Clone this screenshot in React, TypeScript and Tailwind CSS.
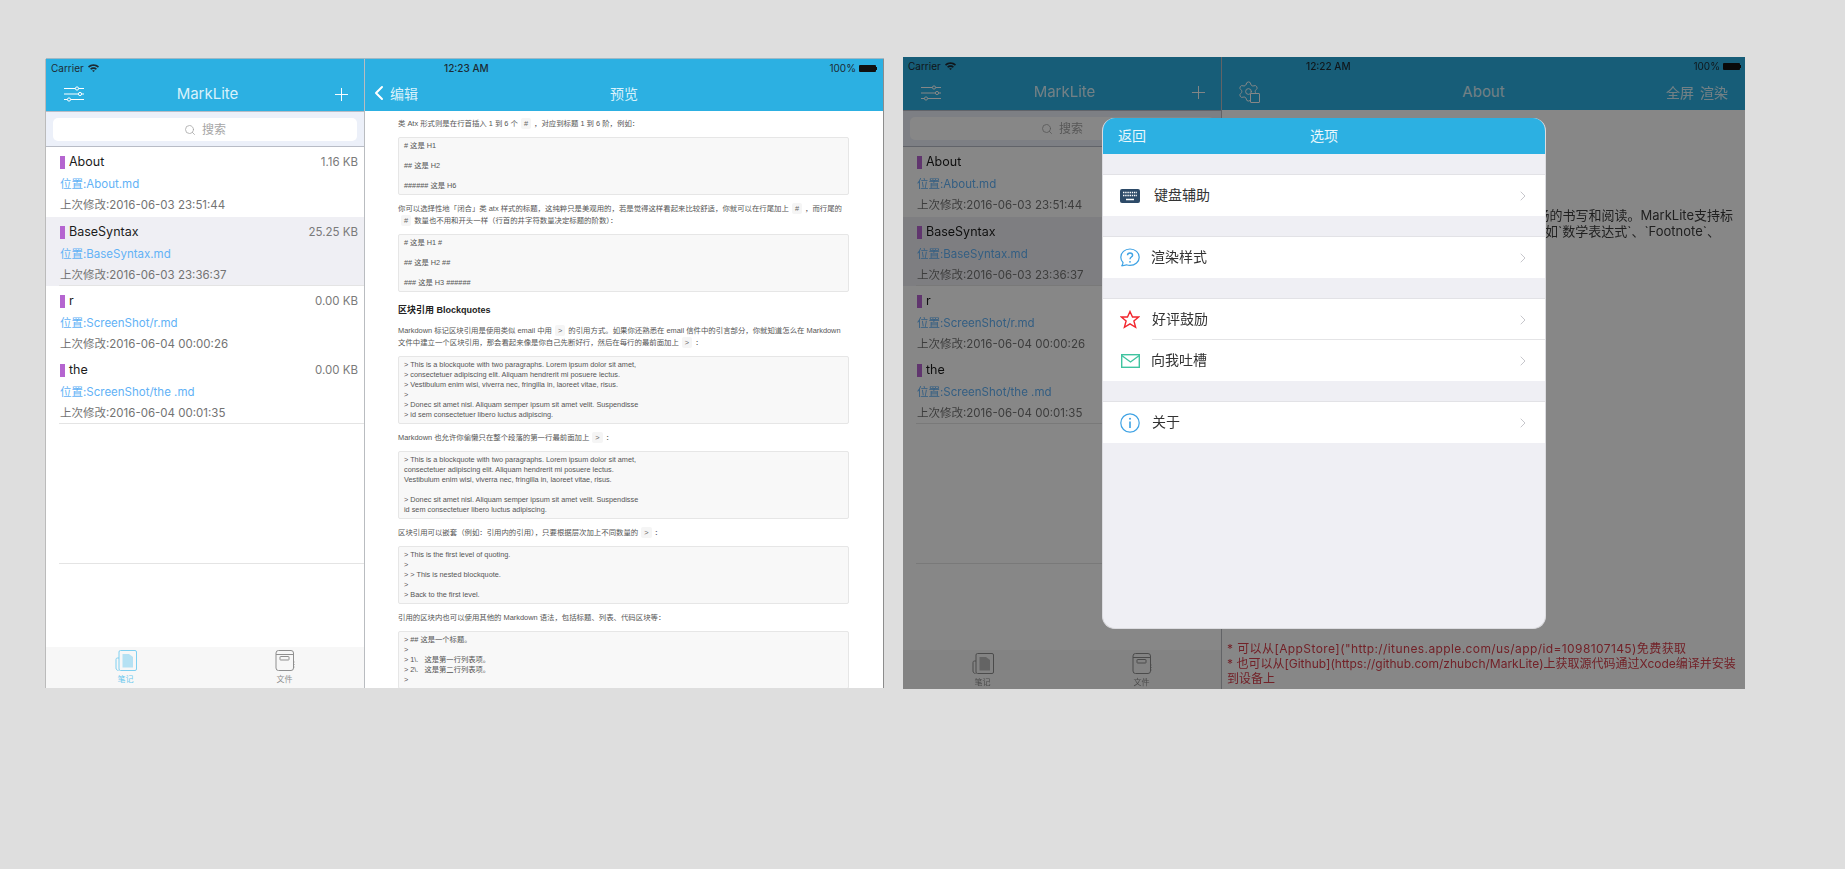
import { Plus, Search, ChevronLeft, ChevronRight, Settings } from "lucide-react";

const files = [
    { name: "About", size: "1.16 KB", path: "位置:About.md", time: "上次修改:2016-06-03 23:51:44", first: true },
    { name: "BaseSyntax", size: "25.25 KB", path: "位置:BaseSyntax.md", time: "上次修改:2016-06-03 23:36:37", selected: true, line: true },
    { name: "r", size: "0.00 KB", path: "位置:ScreenShot/r.md", time: "上次修改:2016-06-04 00:00:26" },
    { name: "the", size: "0.00 KB", path: "位置:ScreenShot/the .md", time: "上次修改:2016-06-04 00:01:35", line: true },
];

function Wifi() {
    return (
        <svg width="11" height="8" viewBox="0 0 11 8" fill="#1d2b33">
            <path d="M0 2.6C3-.5 8-.5 11 2.6L9.9 3.8C7.5 1.4 3.5 1.4 1.1 3.8Z" />
            <path d="M2.1 4.7C3.9 2.9 7.1 2.9 8.9 4.7L7.8 5.8C6.6 4.6 4.4 4.6 3.2 5.8Z" />
            <path d="M4.2 6.8C4.9 6.2 6.1 6.2 6.8 6.8L5.5 8Z" />
        </svg>
    );
}

function SlidersIcon() {
    return (
        <svg width="20" height="16" viewBox="0 0 20 16" fill="none" stroke="white" strokeWidth="1">
            <path d="M0 2.5H20M0 8H20M0 13.5H20" />
            <circle cx="13" cy="2.5" r="1.6" fill="#2cb0e2" />
            <circle cx="16" cy="8" r="1.6" fill="#2cb0e2" />
            <circle cx="5" cy="13.5" r="1.6" fill="#2cb0e2" />
        </svg>
    );
}

function NotesIcon({ color }: { color: string }) {
    return (
        <svg width="22" height="21" viewBox="0 0 22 21" fill="none" stroke={color} strokeWidth="1">
            <path d="M4 8H2.5C1.6 8 1 8.6 1 9.5V18C1 19.4 2 20.5 3.5 20.5" />
            <rect x="4" y="0.5" width="17.5" height="20" rx="1.5" />
            <path d="M7.5 4H14L18 7V17.5H7.5Z" fill={color} fillOpacity="0.55" stroke="none" />
        </svg>
    );
}

function NotebookIcon() {
    return (
        <svg width="20" height="21" viewBox="0 0 20 21" fill="none" stroke="#8f8f8f" strokeWidth="1">
            <rect x="1" y="0.5" width="17.5" height="20" rx="2.5" />
            <path d="M1 4.5H18.5" />
            <rect x="5" y="6.5" width="9" height="3.5" rx="0.5" />
            <path d="M18 12H19.5M18 14.5H19.5M18 17H19.5" />
        </svg>
    );
}

function ListPane({ dim }: { dim?: boolean }) {
    return (
        <div className="flex w-[319px] shrink-0 flex-col border-r border-[#b9bcc0] bg-white">
            <div className="flex h-[18px] items-center gap-1 bg-[#2cb0e2] pl-[5px] text-[10px] text-[#1d2b33]">
                Carrier
                <Wifi />
            </div>
            <div className={dim ? "relative flex h-[35px] items-center justify-between bg-[#2cb0e2] pl-[18px] pr-[12px]" : "relative flex h-[34px] items-center justify-between bg-[#2cb0e2] pl-[18px] pr-[12px]"}>
                <SlidersIcon />
                <span className="text-[15px] text-[#d9f2fb]">MarkLite</span>
                <Plus size={21} color="white" strokeWidth={1.1} />
            </div>
            <div className={dim ? "h-[37px] border-y border-[#b8bcc6] bg-[#ecf0f9] px-[7px] py-[6px]" : "h-[36px] border-y border-[#b8bcc6] bg-[#ecf0f9] px-[7px] py-[6px]"}>
                <div className="flex h-[23px] items-center justify-center gap-[6px] rounded-[5px] bg-white text-[12px] text-[#a6a6a6]">
                    <Search size={12} strokeWidth={1.6} />
                    搜索
                </div>
            </div>
            <div className="flex-1">
                {files.map((f) => (
                    <div key={f.name} className={f.selected ? "bg-[#efeff4]" : ""}>
                        <div className={f.first ? "h-[69px] pl-[14px] pr-[6px] pt-[8px]" : "h-[68px] pl-[14px] pr-[6px] pt-[8px]"}>
                            <div className="flex h-[15px] items-center justify-between">
                                <div className="flex items-center gap-[4px] text-[12.5px] text-[#1c1c1c]">
                                    <span className="h-[13px] w-[5px] bg-[#b565d0]" />
                                    {f.name}
                                </div>
                                <span className="text-[11.5px] text-[#7a7a7a]">{f.size}</span>
                            </div>
                            <div className="mt-[6px] h-[16px] text-[11.5px] leading-[16px] text-[#62b2f6]">{f.path}</div>
                            <div className="mt-[5px] h-[16px] text-[11.5px] leading-[16px] text-[#737373]">{f.time}</div>
                        </div>
                        <div className={f.line ? "ml-[13px] h-[1px] bg-[#e4e4e4]" : "h-[1px]"} />
                    </div>
                ))}
                <div className="ml-[13px] mt-[139px] h-[1px] bg-[#e4e4e4]" />
            </div>
            <div className={dim ? "grid h-[39px] grid-cols-2 bg-[#f7f7f7]" : "grid h-[41px] grid-cols-2 bg-[#f7f7f7]"}>
                <div className="flex flex-col items-center pt-[3px]">
                    <NotesIcon color={dim ? "#8f8f8f" : "#7fd0f1"} />
                    <span className={dim ? "mt-[2px] text-[8px] leading-[12px] text-[#8f8f8f]" : "mt-[2px] text-[8px] leading-[12px] text-[#6cc8ee]"}>笔记</span>
                </div>
                <div className="flex flex-col items-center pt-[3px]">
                    <NotebookIcon />
                    <span className="mt-[2px] text-[8px] leading-[12px] text-[#8f8f8f]">文件</span>
                </div>
            </div>
        </div>
    );
}

function Chip({ children }: { children: string }) {
    return (
        <span className="mx-[3px] inline-block h-[11px] rounded-[2px] bg-[#f5f5f5] px-[3px] leading-[11px] text-[#666]">{children}</span>
    );
}

function Code({ lines }: { lines: string[] }) {
    return (
        <div className="mt-[7px] rounded-[2px] border border-[#e6e6e6] bg-[#f8f8f8] px-[5px] py-[3px] text-[7.3px] leading-[10px] text-[#555]">
            {lines.map((l, i) => (
                <div key={i} className="h-[10px] whitespace-pre">{l}</div>
            ))}
        </div>
    );
}

function Para({ children }: { children: React.ReactNode }) {
    return <p className="mt-[8px] text-[7.4px] leading-[12px] text-[#555]">{children}</p>;
}

function PreviewPane() {
    return (
        <div className="flex min-w-0 flex-1 flex-col border-r border-[#8c8c8c] bg-white">
            <div className="flex h-[18px] items-center justify-between bg-[#2cb0e2] pl-[79px] pr-[6px] text-[10px] text-[#1d2b33]">
                <span className="font-medium">12:23 AM</span>
                <Battery label="100%" />
            </div>
            <div className="relative flex h-[34px] items-center justify-center bg-[#2cb0e2] pb-[2px] text-[14px] text-[#d9f2fb]">
                <div className="absolute left-[2px] flex items-center text-[#d9f2fb]">
                    <ChevronLeft size={24} color="white" strokeWidth={2} />
                    <span className="-ml-[1px]">编辑</span>
                </div>
                预览
            </div>
            <div className="h-0 flex-1 overflow-hidden pl-[33px] pr-[34px] pt-[7px] font-['Liberation_Sans','Noto_Sans_CJK_SC',sans-serif]">
                <p className="text-[7.4px] leading-[12px] text-[#555]">
                    类 Atx 形式则是在行首插入 1 到 6 个<Chip>#</Chip>{"\uFF0C对应到标题 1 到 6 阶\uFF0C例如\uFF1A"}
                </p>
                <Code lines={["# 这是 H1", "", "## 这是 H2", "", "###### 这是 H6"]} />
                <Para>
                    {"你可以选择性地「闭合」类 atx 样式的标题\uFF0C这纯粹只是美观用的\uFF0C若是觉得这样看起来比较舒适\uFF0C你就可以在行尾加上"}<Chip>#</Chip>{"\uFF0C而行尾的"}
                    <br />
                    <Chip>#</Chip>{"数量也不用和开头一样\uFF08行首的井字符数量决定标题的阶数\uFF09\uFF1A"}
                </Para>
                <Code lines={["# 这是 H1 #", "", "## 这是 H2 ##", "", "### 这是 H3 ######"]} />
                <h2 className="mt-[11px] h-[14px] text-[9px] font-bold leading-[14px] text-[#222]">区块引用 Blockquotes</h2>
                <Para>
                    Markdown 标记区块引用是使用类似 email 中用<Chip>&gt;</Chip>{"的引用方式。如果你还熟悉在 email 信件中的引言部分\uFF0C你就知道怎么在 Markdown"}
                    <br />
                    {"文件中建立一个区块引用\uFF0C那会看起来像是你自己先断好行\uFF0C然后在每行的最前面加上"}<Chip>&gt;</Chip>{"\uFF1A"}
                </Para>
                <Code
                    lines={[
                        "> This is a blockquote with two paragraphs. Lorem ipsum dolor sit amet,",
                        "> consectetuer adipiscing elit. Aliquam hendrerit mi posuere lectus.",
                        "> Vestibulum enim wisi, viverra nec, fringilla in, laoreet vitae, risus.",
                        ">",
                        "> Donec sit amet nisl. Aliquam semper ipsum sit amet velit. Suspendisse",
                        "> id sem consectetuer libero luctus adipiscing.",
                    ]}
                />
                <Para>
                    Markdown 也允许你偷懒只在整个段落的第一行最前面加上<Chip>&gt;</Chip>{"\uFF1A"}
                </Para>
                <Code
                    lines={[
                        "> This is a blockquote with two paragraphs. Lorem ipsum dolor sit amet,",
                        "consectetuer adipiscing elit. Aliquam hendrerit mi posuere lectus.",
                        "Vestibulum enim wisi, viverra nec, fringilla in, laoreet vitae, risus.",
                        "",
                        "> Donec sit amet nisl. Aliquam semper ipsum sit amet velit. Suspendisse",
                        "id sem consectetuer libero luctus adipiscing.",
                    ]}
                />
                <Para>
                    {"区块引用可以嵌套\uFF08例如\uFF1A引用内的引用\uFF09\uFF0C只要根据层次加上不同数量的"}<Chip>&gt;</Chip>{"\uFF1A"}
                </Para>
                <Code
                    lines={[
                        "> This is the first level of quoting.",
                        ">",
                        "> > This is nested blockquote.",
                        ">",
                        "> Back to the first level.",
                    ]}
                />
                <Para>{"引用的区块内也可以使用其他的 Markdown 语法\uFF0C包括标题、列表、代码区块等\uFF1A"}</Para>
                <Code lines={["> ## 这是一个标题。", ">", "> 1\\.   这是第一行列表项。", "> 2\\.   这是第二行列表项。", ">"]} />
            </div>
        </div>
    );
}

function Battery({ label }: { label: string }) {
    return (
        <div className="flex items-center gap-[3px]">
            {label}
            <div className="flex items-center">
                <div className="h-[7px] w-[17px] rounded-[1px] bg-[#111]" />
                <div className="h-[3px] w-[1px] bg-[#111]" />
            </div>
        </div>
    );
}

function AboutPane() {
    return (
        <div className="flex min-w-0 flex-1 flex-col bg-white">
            <div className="flex h-[18px] items-center justify-between bg-[#2cb0e2] pl-[84px] pr-[4px] text-[10px] text-[#1d2b33]">
                <span className="font-medium">12:22 AM</span>
                <Battery label="100%" />
            </div>
            <div className="relative flex h-[35px] items-center justify-center bg-[#2cb0e2] text-[15px] text-[#d9f2fb]">
                <div className="absolute left-[15px] top-[5px]">
                    <Settings size={23} color="white" strokeWidth={1} />
                    <div className="absolute bottom-0 right-0 h-[10px] w-[10px] rounded-[1px] border border-white bg-[#2cb0e2]" />
                </div>
                About
                <div className="absolute right-[17px] flex gap-[6px] text-[14px]">
                    <span>全屏</span>
                    <span>渲染</span>
                </div>
            </div>
            <div className="flex h-0 flex-1 flex-col justify-between overflow-hidden pb-[3px] pl-[5px]">
                <div className="mt-[97px] whitespace-nowrap text-right text-[13px] leading-[16px] text-[#3d3d3d]">
                    <div className="pr-[12px]">流畅的书写和阅读。MarkLite支持标</div>
                    <div className="pr-[25px]">如`数学表达式`、`Footnote`、</div>
                </div>
                <div className="whitespace-nowrap text-[12px] leading-[15px] text-[#d8404c]">
                    <span className="tracking-[0.4px]">* 可以从[AppStore]("http://itunes.apple.com/us/app/id=1098107145)免费获取</span>
                    <br />* 也可以从[Github](https://github.com/zhubch/MarkLite)上获取源代码通过Xcode编译并安装
                    <br />
                    到设备上
                </div>
            </div>
        </div>
    );
}

function OptionRow({ icon, label, textClass, inset }: { icon: React.ReactNode; label: string; textClass: string; inset?: boolean }) {
    return (
        <div className="relative flex h-[41px] items-center bg-white pl-[16px] pr-[14px] text-[14px] text-[#333]">
            <span className="flex w-[22px] justify-center">{icon}</span>
            <span className={textClass}>{label}</span>
            <ChevronRight className="ml-auto" size={16} color="#c7c7cc" strokeWidth={1.5} />
            {inset && <div className="absolute bottom-0 left-[49px] right-0 h-[1px] bg-[#e4e4e6]" />}
        </div>
    );
}

function OptionsModal() {
    return (
        <div className="absolute left-[199px] top-[61px] h-[511px] w-[444px] overflow-hidden rounded-[13px] border-b border-x border-[#dcdce0] bg-[#efeff4]">
            <div className="flex h-[36px] items-center justify-center bg-[#2cb0e2] pb-[2px] text-[14px] text-[#e8f7fc]">
                <span className="absolute left-[15px]">返回</span>
                选项
            </div>
            <div className="mt-[20px] border-t border-[#e2e2e6]">
                <OptionRow
                    label="键盘辅助"
                    textClass="ml-[13px] pb-[2px]"
                    icon={
                        <svg width="20" height="14" viewBox="0 0 20 14">
                            <rect width="20" height="14" rx="2" fill="#2d4a68" />
                            <path d="M3 3.5H17M3 6.5H17" stroke="white" strokeWidth="1.4" strokeDasharray="1.4 0.8" />
                            <path d="M6 10.5H14" stroke="white" strokeWidth="1.5" />
                        </svg>
                    }
                />
            </div>
            <div className="mt-[20px] border-t border-[#e2e2e6]">
                <OptionRow
                    label="渲染样式"
                    textClass="ml-[10px] pb-[2px]"
                    icon={
                        <svg width="20" height="19" viewBox="0 0 20 19" fill="none" stroke="#3ea2e4" strokeWidth="1.2">
                            <path d="M3 14.5C1.6 13 .8 11.2.8 9.2.8 4.6 4.8 1 10 1s9.2 3.6 9.2 8.2-4 8.2-9.2 8.2c-1.3 0-2.5-.2-3.6-.6L1.5 18C2.6 17 3 15.8 3 14.5Z" />
                            <path d="M7.500 7.300C7.500 5.900 8.600 5 10 5s2.600.9 2.600 2.200c0 1.800-2.600 1.900-2.600 4" strokeWidth="1.4" />
                            <circle cx="10" cy="13.800" r="0.9" fill="#3ea2e4" stroke="none" />
                        </svg>
                    }
                />
            </div>
            <div className="mt-[20px] border-t border-[#e2e2e6]">
                <OptionRow
                    label="好评鼓励"
                    textClass="ml-[11px] pb-[2px]"
                    inset
                    icon={
                        <svg width="20" height="19" viewBox="0 0 20 19" fill="none" stroke="#f2262e" strokeWidth="1.4" strokeLinejoin="miter">
                            <path d="M10 1.500L12.500 7H18.600L13.900 11L15.600 17.300L10 13.900L4.400 17.300L6.100 11L1.400 7H7.500Z" />
                        </svg>
                    }
                />
                <OptionRow
                    label="向我吐槽"
                    textClass="ml-[10px] pb-[2px]"
                    icon={
                        <svg width="19" height="14" viewBox="0 0 19 14" fill="none" stroke="#40c4a0" strokeWidth="1.400">
                            <rect x="0.700" y="0.700" width="17.600" height="12.600" />
                            <path d="M0.700 1.500L9.500 8L18.300 1.500" />
                        </svg>
                    }
                />
            </div>
            <div className="mt-[20px] border-t border-[#e2e2e6]">
                <OptionRow
                    label="关于"
                    textClass="ml-[11px] pb-[2px]"
                    icon={
                        <svg width="20" height="20" viewBox="0 0 20 20" fill="none" stroke="#3ea2e4" strokeWidth="1.200">
                            <circle cx="10" cy="10" r="9.200" />
                            <path d="M10 8.500V15" strokeWidth="1.600" />
                            <circle cx="10" cy="5.800" r="1" fill="#3ea2e4" stroke="none" />
                        </svg>
                    }
                />
            </div>
        </div>
    );
}

export default function App() {
    return (
        <div className="min-h-screen bg-[#dedede] font-['Inter','Noto_Sans_CJK_SC',sans-serif]">
            <div className="flex items-start gap-[19px] pl-[46px] pt-[57px] blur-[0.5px]">
                <div className="mt-[2px] flex h-[629px] w-[838px] shrink-0 shadow-[0_-1px_0_#9fb9c6,-1px_0_0_#bbbbbb]">
                    <ListPane />
                    <PreviewPane />
                </div>
                <div className="relative flex h-[632px] w-[842px] shrink-0">
                    <ListPane dim />
                    <AboutPane />
                    <div className="absolute inset-0 bg-black/[.47]" />
                    <OptionsModal />
                </div>
            </div>
        </div>
    );
}
